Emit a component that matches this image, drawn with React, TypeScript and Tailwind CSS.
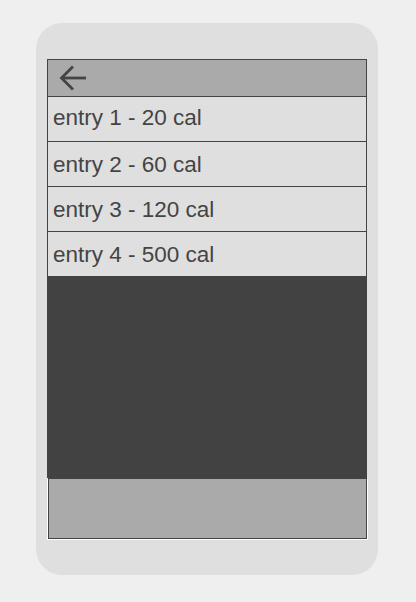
import React from "react";

const entries = ["entry 1 - 20 cal", "entry 2 - 60 cal", "entry 3 - 120 cal", "entry 4 - 500 cal"];

export default function App() {
  return (
    <div className="w-[416px] h-[602px] bg-[#efefef] pt-[23px] pl-[36px]" style={{ fontFamily: '"Liberation Sans", Arial, sans-serif' }}>
      <div className="w-[342px] h-[552px] rounded-[26px] bg-[#dfdfdf] pt-[36px] pl-[11px]">
        <div className="w-[320px] h-[480px] flex flex-col">
          <div className="h-[38px] shrink-0 bg-[#aaaaaa] border border-[#444444] flex items-center pl-[11px]">
            <svg width="28" height="28" viewBox="0 0 28 28" fill="none" stroke="#444444" strokeWidth="2.8" strokeLinecap="butt" strokeLinejoin="miter">
              <path d="M27 14H2.5" />
              <path d="M14 2.5L2.5 14L14 25.5" />
            </svg>
          </div>
          {entries.map((e, i) => (
            <div
              key={e}
              className={`shrink-0 flex items-center pl-[5px] border-x border-[#444444] text-[22.5px] text-[#444444] ${i < 3 ? "h-[45px] border-b" : "h-[44px] pt-px"} ${i === 0 ? "pb-[3px]" : ""} ${i === 1 || i === 2 ? "pt-[2px]" : ""}`}
            >
              {e}
            </div>
          ))}
          <div className="h-[202px] shrink-0 bg-[#424242]" />
          <div className="ml-px w-[319px] h-[61px] shrink-0 bg-[#aaaaaa] border border-[#444444] shadow-[-1px_1px_0_0_#ffffff,1px_1px_0_0_#ffffff]" />
        </div>
      </div>
    </div>
  );
}
